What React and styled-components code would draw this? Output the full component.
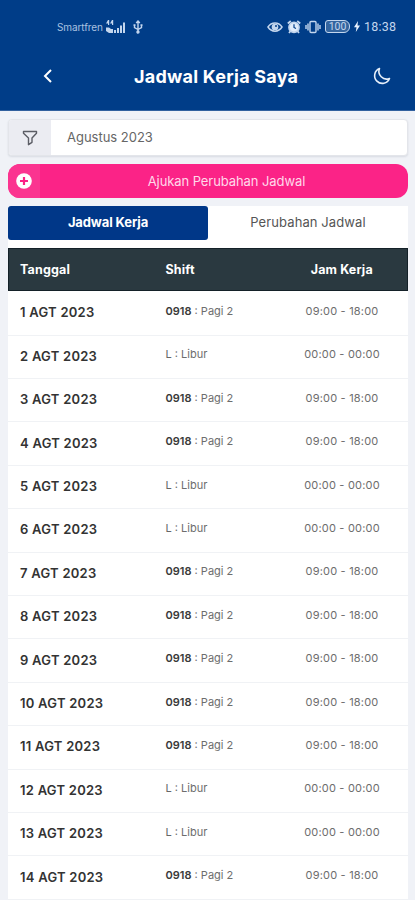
import React from 'react';
import styled, { createGlobalStyle } from 'styled-components';

const GlobalStyle = createGlobalStyle`
  * {
    box-sizing: border-box;
  }
  body {
    margin: 0;
    height: 900px;
    overflow: hidden;
    background: #f0f2f7;
    font-family: Inter, 'Liberation Sans', sans-serif;
  }
`;

const Screen = styled.div`
  width: 415px;
  height: 900px;
  overflow: hidden;
`;

const Header = styled.header`
  height: 111px;
  background: #003d88;
  border-bottom: 1px solid #32619f;
  color: #fff;
`;

const StatusBar = styled.div`
  display: flex;
  justify-content: space-between;
  align-items: center;
  height: 51px;
  padding: 2px 19px 0 57px;
  color: #c3d6ee;
  svg {
    display: block;
    flex: none;
  }
`;

const StatusGroup = styled.div`
  display: flex;
  align-items: center;
  gap: ${({ $gap }) => $gap}px;
`;

const Carrier = styled.span`
  width: 41px;
  font-size: 10px;
  letter-spacing: -0.1px;
  white-space: nowrap;
  color: #a9c1e0;
`;

const Clock = styled.span`
  width: 32px;
  font-family: Roboto, sans-serif;
  font-size: 12.5px;
  letter-spacing: 0.2px;
  white-space: nowrap;
`;

const TitleBar = styled.div`
  display: grid;
  grid-template-columns: 96px 1fr 66px;
  align-items: center;
  height: 50px;
  svg {
    display: block;
    margin: auto;
  }
`;

const Title = styled.h1`
  margin: 0;
  padding-left: 38px;
  font-size: 18px;
  font-weight: 700;
  letter-spacing: 0.23px;
  white-space: nowrap;
`;

const Content = styled.main`
  padding: 8px 7px 0 8px;
`;

const Filter = styled.div`
  display: flex;
  height: 37px;
  border: 1px solid #e3e5ea;
  border-radius: 4px;
  overflow: hidden;
  background: #fff;
  box-shadow: 0 1px 2px rgba(40, 50, 80, 0.12);
`;

const FilterIcon = styled.div`
  display: flex;
  align-items: center;
  justify-content: center;
  width: 42px;
  background: #ebecf2;
`;

const FilterValue = styled.div`
  padding-left: 16px;
  font-size: 13px;
  line-height: 35px;
  letter-spacing: -0.02px;
  color: #666;
`;

const RequestButton = styled.button`
  display: flex;
  align-items: center;
  width: 100%;
  height: 34px;
  margin-top: 8px;
  padding: 0;
  border: none;
  border-radius: 12px;
  overflow: hidden;
  background: #fb2387;
  color: #ffd9ea;
  font: inherit;
  font-size: 13px;
  letter-spacing: -0.08px;
  svg {
    display: block;
  }
`;

const ButtonIcon = styled.span`
  display: flex;
  align-items: center;
  justify-content: center;
  width: 32px;
  height: 100%;
  background: #fb3490;
`;

const ButtonLabel = styled.span`
  flex: 1;
  padding-left: 5px;
  text-align: center;
`;

const Tabs = styled.div`
  display: flex;
  height: 42px;
  margin-top: 8px;
  background: #fff;
`;

const Tab = styled.div`
  flex: 1;
  height: 34px;
  border-radius: 3px;
  font-size: 13px;
  font-weight: ${({ $active }) => ($active ? 700 : 400)};
  line-height: 33px;
  letter-spacing: ${({ $active }) => ($active ? '-0.12px' : '0.1px')};
  text-align: center;
  color: ${({ $active }) => ($active ? '#fff' : '#555')};
  background: ${({ $active }) => ($active ? '#003788' : '#fff')};
`;

const Row = styled.div`
  display: grid;
  grid-template-columns: 145.5px 109px 1fr;
  align-items: center;
  height: 43.42px;
  padding-left: 12px;
  border-bottom: 1px solid #f0f2f5;
`;

const HeadRow = styled(Row)`
  height: 43px;
  border: 1px solid #142128;
  padding-left: 11px;
  background: #2a3940;
  color: #fff;
  font-size: 12.5px;
  font-weight: 700;
  letter-spacing: 0.15px;
`;

const TableBody = styled.div`
  padding-top: 1.2px;
  background: #fff;
`;

const DateCell = styled.div`
  padding-bottom: 2px;
  font-size: 13px;
  font-weight: 600;
  letter-spacing: 0.25px;
  color: #333;
`;

const Cell = styled.div`
  padding-bottom: 4.8px;
  font-size: 11px;
  color: #6d6d6d;
  b {
    font-weight: ${({ $off }) => ($off ? 400 : 600)};
    color: ${({ $off }) => ($off ? '#666' : '#3a3a3a')};
  }
`;

const HoursCell = styled(Cell)`
  padding-left: 1.5px;
  text-align: center;
  letter-spacing: 0.2px;
`;

const HeadHours = styled.div`
  padding-left: 2px;
  text-align: center;
`;

const DAYS_OFF = [2, 5, 6, 12, 13];
const schedule = Array.from({ length: 14 }, (_, i) => ({
  day: i + 1,
  off: DAYS_OFF.includes(i + 1)
}));

const SignalIcon = () => (
  <svg width="21" height="14" viewBox="0 0 21 14" fill="currentColor">
    <path d="M3 0L1 3.500h2V5h1.200V0zM7 0L5 3.500h2V5h1.200V0z" />
    <path d="M1 7.500h3l2 1.500h2v4H4L1 11z" />
    <path d="M9 10h2v3H9zM12 8h2v5h-2zM15 5.500h2V13h-2zM18 2.500h2V13h-2z" />
  </svg>
);

const UsbIcon = () => (
  <svg width="10" height="14" viewBox="0 0 10 14" fill="none" stroke="currentColor" strokeWidth="1.4">
    <path d="M5 2v10M1.500 5v2.500L5 9.500l3.500-2V5M3.200 3L5 1l1.800 2" />
    <circle cx="5" cy="12" r="1" fill="currentColor" />
    <path d="M.5 5h2M7.500 5h2" />
  </svg>
);

const EyeIcon = () => (
  <svg width="16" height="12" viewBox="0 0 16 12" fill="none" stroke="currentColor" strokeWidth="1.5">
    <path d="M1 6c3.500-5.500 10.500-5.500 14 0-3.500 5.500-10.500 5.500-14 0z" />
    <circle cx="8" cy="6" r="2.600" fill="currentColor" />
    <path d="M8 5h2" stroke="#003d88" />
  </svg>
);

const AlarmIcon = () => (
  <svg width="14" height="14" viewBox="0 0 14 14" fill="none" stroke="currentColor" strokeWidth="1.8">
    <circle cx="7" cy="7.300" r="5" fill="#e2edfb" />
    <path d="M.8 3.500L3.800 1M13.200 3.500L10.200 1M2 13l1.600-2M12 13l-1.600-2" />
    <path d="M7 4.300v3.200l2 1" stroke="#003d88" strokeWidth="1.200" />
  </svg>
);

const VibrateIcon = () => (
  <svg width="16" height="14" viewBox="0 0 16 14" fill="none" stroke="currentColor" strokeWidth="1.400">
    <rect x="5" y="1.500" width="6" height="11" rx="1" />
    <path d="M3 3.500v7M13 3.500v7M1 5v4M15 5v4" />
  </svg>
);

const Battery = styled.span`
  display: flex;
  align-items: center;
  justify-content: center;
  width: 25px;
  height: 13px;
  border: 1.5px solid #c3d6ee;
  border-radius: 3px 6px 6px 3px;
  background: #34659f;
  font-family: Roboto, sans-serif;
  font-size: 10.5px;
  line-height: 10px;
`;

const BoltIcon = () => (
  <svg width="6" height="11" viewBox="0 0 6 11" fill="#e8f2ff">
    <path d="M4 0L0 6.200h2.500L1.800 11 6 4.500H3.500z" />
  </svg>
);

const BackIcon = () => (
  <svg width="10" height="16" viewBox="0 0 10 16" fill="none" stroke="#fff" strokeWidth="2">
    <path d="M8 2L2 8l6 6" />
  </svg>
);

const MoonIcon = () => (
  <svg width="18" height="18" viewBox="0 0 18 18" fill="none" stroke="#e6effa" strokeWidth="1.600" strokeLinejoin="round">
    <path d="M6.500 1.500A7.700 7.700 0 1 0 16.500 11.500 7.700 7.700 0 0 1 6.500 1.500z" />
  </svg>
);

const FunnelIcon = () => (
  <svg width="16" height="16" viewBox="0 0 16 16" fill="none" stroke="#5b5d65" strokeWidth="1.400" strokeLinejoin="round">
    <path d="M1.500 1.500h13v1.700L10 8v4.300L6.500 14.700V8L1.500 3.200z" />
  </svg>
);

const PlusIcon = () => (
  <svg width="16" height="16" viewBox="0 0 16 16">
    <circle cx="8" cy="8" r="7.800" fill="#fff" />
    <path d="M8 4v8M4 8h8" stroke="#fb2387" strokeWidth="2.200" />
  </svg>
);

const ScheduleRow = ({ day, off }) => (
  <Row>
    <DateCell>{day} AGT 2023</DateCell>
    <Cell $off={off}>
      <b>{off ? 'L' : '0918'}</b> : {off ? 'Libur' : 'Pagi 2'}
    </Cell>
    <HoursCell>{off ? '00:00 - 00:00' : '09:00 - 18:00'}</HoursCell>
  </Row>
);

const App = () => (
  <Screen>
    <GlobalStyle />
    <Header>
      <StatusBar>
        <StatusGroup $gap={7}>
          <Carrier>Smartfren</Carrier>
          <SignalIcon />
          <UsbIcon />
        </StatusGroup>
        <StatusGroup $gap={4}>
          <EyeIcon />
          <AlarmIcon />
          <VibrateIcon />
          <Battery>100</Battery>
          <BoltIcon />
          <Clock>18:38</Clock>
        </StatusGroup>
      </StatusBar>
      <TitleBar>
        <BackIcon />
        <Title>Jadwal Kerja Saya</Title>
        <MoonIcon />
      </TitleBar>
    </Header>
    <Content>
      <Filter>
        <FilterIcon>
          <FunnelIcon />
        </FilterIcon>
        <FilterValue>Agustus 2023</FilterValue>
      </Filter>
      <RequestButton>
        <ButtonIcon>
          <PlusIcon />
        </ButtonIcon>
        <ButtonLabel>Ajukan Perubahan Jadwal</ButtonLabel>
      </RequestButton>
      <Tabs>
        <Tab $active>Jadwal Kerja</Tab>
        <Tab>Perubahan Jadwal</Tab>
      </Tabs>
      <HeadRow>
        <div>Tanggal</div>
        <div>Shift</div>
        <HeadHours>Jam Kerja</HeadHours>
      </HeadRow>
      <TableBody>
        {schedule.map(({ day, off }) => (
          <ScheduleRow key={day} day={day} off={off} />
        ))}
      </TableBody>
    </Content>
  </Screen>
);

export default App;
